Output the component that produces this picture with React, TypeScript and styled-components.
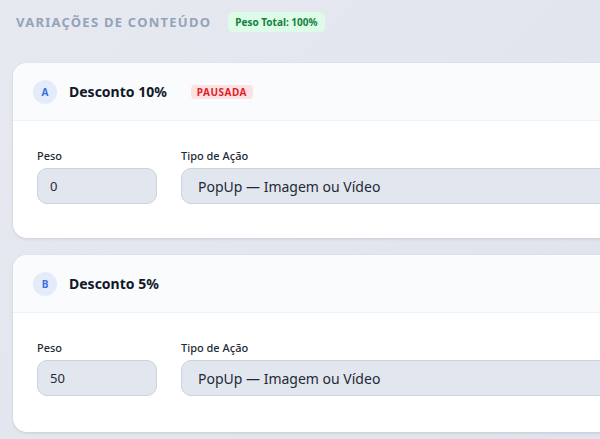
import React from 'react';
import styled, { createGlobalStyle } from 'styled-components';

const GlobalStyle = createGlobalStyle`
  html, body {
    margin: 0;
    padding: 0;
    overflow: hidden;
  }
  body {
    font-family: "Noto Sans", "Liberation Sans", sans-serif;
    background: linear-gradient(135deg, #e6e9f0 0%, #dfe3ec 100%);
    min-height: 439px;
  }
`;

const Page = styled.div`
  width: 700px;
  padding: 10px 0 0 13px;
`;

const SectionHeader = styled.div`
  display: flex;
  align-items: center;
  gap: 17px;
  height: 24px;
  padding-left: 3px;
  margin-bottom: 29px;
`;

const SectionTitle = styled.h2`
  margin: 0;
  font-size: 13px;
  font-weight: 700;
  letter-spacing: 1.25px;
  color: #94a3b8;
  text-transform: uppercase;
`;

const TotalBadge = styled.span`
  background: #dcfce7;
  color: #15803d;
  font-size: 10px;
  font-weight: 700;
  padding: 3px 7px;
  border-radius: 5px;
`;

const CardList = styled.div`
  display: flex;
  flex-direction: column;
  gap: 17px;
`;

const Card = styled.section`
  background: #ffffff;
  border-radius: 14px;
  box-shadow: 0 1px 3px rgba(15, 23, 42, 0.12);
  overflow: hidden;
`;

const CardHeader = styled.div`
  display: flex;
  align-items: center;
  height: 57px;
  padding: 0 20px;
  background: #fafbfd;
  border-bottom: 1px solid #eef1f5;
`;

const Letter = styled.span`
  width: 24px;
  height: 24px;
  border-radius: 50%;
  background: #e4ebfa;
  color: #3b6fe0;
  font-size: 10px;
  font-weight: 700;
  display: flex;
  align-items: center;
  justify-content: center;
  margin-right: 12px;
`;

const Name = styled.span`
  font-size: 14px;
  font-weight: 700;
  color: #111827;
`;

const StatusBadge = styled.span`
  margin-left: 24px;
  background: #fee2e2;
  color: #e11d2e;
  font-size: 10px;
  font-weight: 700;
  letter-spacing: 0.5px;
  padding: 0 6px;
  line-height: 14px;
  border-radius: 4px;
`;

const CardBody = styled.div<{ $bottom: number }>`
  display: flex;
  gap: 24px;
  padding: 28px 24px ${p => p.$bottom}px;
`;

const Field = styled.div<{ $width?: number }>`
  display: flex;
  flex-direction: column;
  gap: 5px;
  width: ${p => (p.$width ? `${p.$width}px` : 'auto')};
  flex: ${p => (p.$width ? '0 0 auto' : '1')};
`;

const Label = styled.label`
  font-size: 11px;
  font-weight: 500;
  color: #1f2937;
  line-height: 14px;
`;

const Control = styled.div<{ $size: number; $pad: number }>`
  height: 36px;
  box-sizing: border-box;
  border-radius: 10px;
  background: #e2e6ee;
  border: 1px solid #cdd3dc;
  display: flex;
  align-items: center;
  padding-left: ${p => p.$pad}px;
  font-size: ${p => p.$size}px;
  color: #1f2937;
`;

interface Variation {
  letter: string;
  name: string;
  paused?: boolean;
  weight: number;
}

const variations: Variation[] = [
  { letter: 'A', name: 'Desconto 10%', paused: true, weight: 0 },
  { letter: 'B', name: 'Desconto 5%', weight: 50 },
];

const App: React.FC = () => {
  return (
    <>
      <GlobalStyle />
      <Page>
        <SectionHeader>
          <SectionTitle>Variações de Conteúdo</SectionTitle>
          <TotalBadge>Peso Total: 100%</TotalBadge>
        </SectionHeader>
        <CardList>
          {variations.map((v, i) => (
            <Card key={v.letter}>
              <CardHeader>
                <Letter>{v.letter}</Letter>
                <Name>{v.name}</Name>
                {v.paused && <StatusBadge>PAUSADA</StatusBadge>}
              </CardHeader>
              <CardBody $bottom={i === 0 ? 34 : 36}>
                <Field $width={120}>
                  <Label>Peso</Label>
                  <Control $size={13} $pad={12}>{v.weight}</Control>
                </Field>
                <Field>
                  <Label>Tipo de Ação</Label>
                  <Control $size={14} $pad={16}>PopUp — Imagem ou Vídeo</Control>
                </Field>
              </CardBody>
            </Card>
          ))}
        </CardList>
      </Page>
    </>
  );
};

export default App;
